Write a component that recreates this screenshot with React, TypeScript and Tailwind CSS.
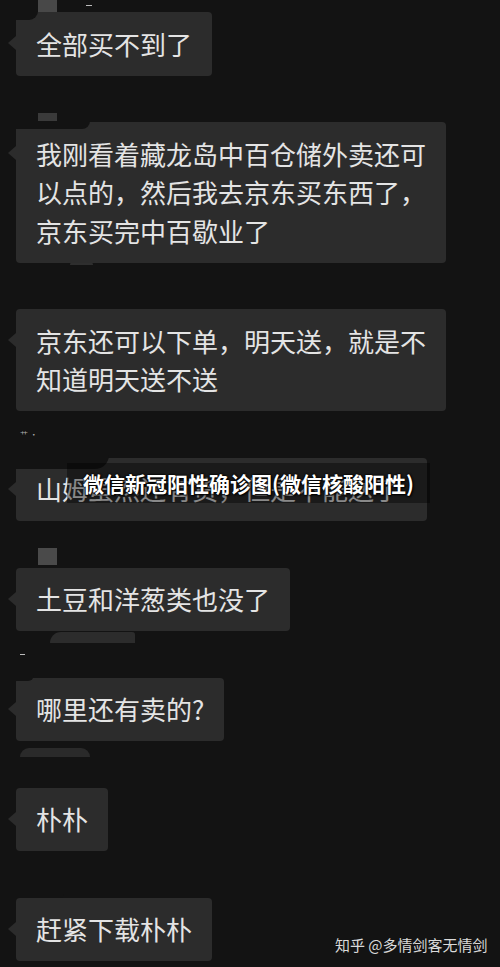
import React from 'react';

type Msg = { lines: string[]; w?: string };

const MESSAGES: Msg[] = [
  { lines: ['全部买不到了'] },
  {
    lines: [
      '我刚看着藏龙岛中百仓储外卖还可',
      '以点的，然后我去京东买东西了，',
      '京东买完中百歇业了',
    ],
  },
  { lines: ['京东还可以下单，明天送，就是不', '知道明天送不送'] },
  { lines: ['山姆虽然还有货，但是不能送了'], w: 'w-[411px]' },
  { lines: ['土豆和洋葱类也没了'] },
  { lines: ['哪里还有卖的?'] },
  { lines: ['朴朴'] },
  { lines: ['赶紧下载朴朴'] },
];

function Bubble({ msg }: { msg: Msg }) {
  return (
    <div
      className={`relative self-start bg-[#2c2c2c] rounded-[4px] px-5 py-[12.5px] text-[26px] leading-[38.5px] text-[#e4e4e4] whitespace-nowrap ${
        msg.w || ''
      }`}
    >
      <span className="absolute left-[-8px] top-[24px] w-0 h-0 border-y-[7px] border-y-transparent border-r-[8px] border-r-[#2c2c2c]" />
      {msg.lines.map((l, i) => (
        <div key={i}>{l}</div>
      ))}
    </div>
  );
}

export default function App() {
  return (
    <div
      className="relative w-full h-[967px] overflow-hidden bg-[#131313]"
      style={{ fontFamily: '"Noto Sans CJK SC", "Noto Sans", sans-serif' }}
    >
      {/* leftover bits of the blacked-out names / avatars */}
      <div className="absolute left-[38px] top-0 w-[19px] h-[18px] bg-[#484848]" />
      <div className="absolute left-[86px] top-[5px] w-[6px] h-[1px] bg-[#bbbbbb]" />
      <div className="absolute left-[38px] top-[113px] w-[19px] h-[14px] bg-[#3a3a3a]" />
      <div className="absolute left-[38px] top-[548px] w-[19px] h-[17px] bg-[#4a4a4a]" />
      <div className="absolute left-[70px] top-[262px] w-[23px] h-[3px] bg-[#2e2e2e] rounded-t-full" />
      <div className="absolute left-[50px] top-[632px] w-[85px] h-[11px] bg-[#2c2c2c] rounded-tr-[10px] rounded-tl-[40px]" />
      <div className="absolute left-[20px] top-[748px] w-[70px] h-[9px] bg-[#2a2a2a] rounded-t-[10px]" />
      <div className="absolute left-[20px] top-[654px] w-[5px] h-[1px] bg-[#bbbbbb]" />
      <div className="absolute left-[20px] top-[430px] text-[8px] leading-[10px] text-[#aaaaaa]">艹 ·</div>

      <div className="flex flex-col gap-[46.5px] pl-4 pt-[12px]">
        {MESSAGES.map((m, i) => (
          <Bubble key={i} msg={m} />
        ))}
      </div>

      {/* black patches over bubble corners */}
      <div className="absolute left-[14px] top-[11px] w-[24px] h-[9px] bg-[#131313] rounded-br-[20px]" />
      <div className="absolute left-[14px] top-[121px] w-[76px] h-[8px] bg-[#131313] rounded-br-[30px]" />
      <div className="absolute left-[14px] top-[455px] w-[95px] h-[14px] bg-[#131313] rounded-br-[40px]" />
      <div className="absolute left-[14px] top-[675px] w-[20px] h-[6px] bg-[#131313] rounded-br-[20px]" />
      <div className="absolute left-[14px] top-[894px] w-[50px] h-[4px] bg-[#131313] rounded-br-[20px]" />

      {/* title banner */}
      <div className="absolute left-[67px] top-[463px] w-[363px] h-[40px] bg-black/40 flex items-center justify-center">
        <span className="text-[21px] font-bold text-white leading-none whitespace-nowrap [text-shadow:0_0_2px_#000,0_0_2px_#000,1px_1px_2px_#000]">
          微信新冠阳性确诊图(微信核酸阳性)
        </span>
      </div>

      {/* watermark */}
      <div className="absolute left-[335px] top-[935px] text-[15px] leading-[20px] text-[#dadada] whitespace-nowrap">
        知乎 @多情剑客无情剑
      </div>
    </div>
  );
}
